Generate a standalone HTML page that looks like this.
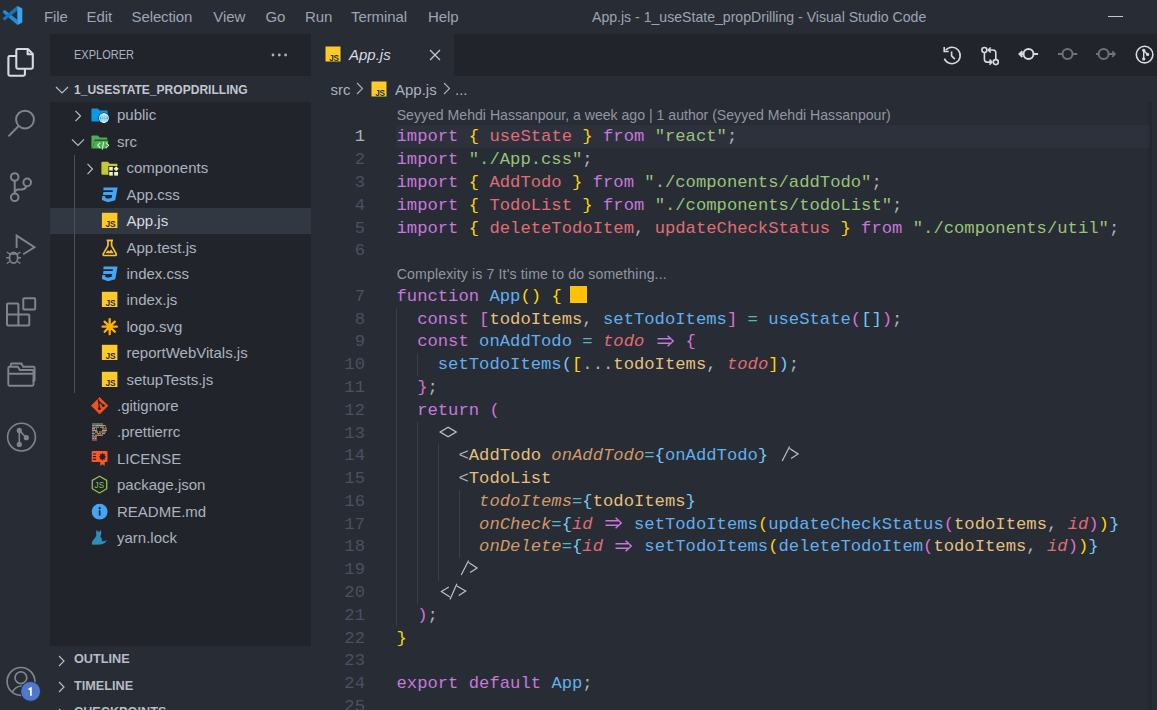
<!DOCTYPE html>
<html><head><meta charset="utf-8"><style>
*{margin:0;padding:0;box-sizing:border-box}
html,body{width:1157px;height:710px;overflow:hidden;background:#282c34;font-family:"Liberation Sans",sans-serif}
.abs{position:absolute}
#title{position:absolute;left:0;top:0;width:1157px;height:34px;background:#282c34}
.mi{position:absolute;top:7px;font-size:15px;line-height:20px;color:#9da5b4;letter-spacing:-0.1px}
#ttl{position:absolute;left:592px;top:7px;font-size:14.1px;line-height:20px;color:#9da5b4}
#act{position:absolute;left:0;top:34px;width:50px;height:676px;background:#282c34}
#side{position:absolute;left:50px;top:34px;width:261px;height:676px;background:#21252b;overflow:hidden}
.row{position:absolute;left:0;width:261px;height:26.3px}
.row.sel{background:#323842}
.row .lbl{position:absolute;top:4px;font-size:15px;line-height:18px;color:#abb2bf;white-space:nowrap}
.row.sel .lbl{color:#d7dae0}
.ico{position:absolute;line-height:0}
.chev{position:absolute;top:6.5px}
.sec{position:absolute;left:0;width:261px;background:#282c34}
.sech{position:absolute;left:23.8px;font-size:13.5px;line-height:16px;font-weight:bold;color:#b6bcc6;white-space:nowrap;transform:scaleX(0.94);transform-origin:0 0}
#editor{position:absolute;left:311px;top:34px;width:846px;height:676px;background:#282c34}
.ln{position:absolute;left:311px;width:54px;text-align:right;font-family:"Liberation Mono",monospace;font-size:17.22px;line-height:22.8px;height:22.8px;color:#495162}
.ln.act{color:#abb2bf}
.cl{position:absolute;left:396.5px;font-family:"Liberation Mono",monospace;font-size:17.22px;line-height:22.8px;height:22.8px;white-space:pre;color:#abb2bf}
.lens{position:absolute;margin-top:1.3px;left:396.7px;font-size:14.1px;line-height:22.8px;height:22.8px;color:#9197a2;white-space:nowrap}
.lig{display:inline-block;vertical-align:top;height:22.78px;line-height:0}
.lig svg{display:block}
.arr{display:inline-block;width:20.67px;height:12px;vertical-align:-0.5px;line-height:0}
.arr svg{display:block}
.guide{position:absolute;width:1px;background:#3b4048}
</style></head><body>
<div id="title">
<svg class="abs" style="left:0;top:0" width="30" height="30" viewBox="0 0 30 30"><path d="M2.9 12.4q-.4-.6.1-1.1l1-1q.6-.5 1.2 0L17.4 19.8v5.1z" fill="#1f8ddb"/><path d="M2.9 17.9q-.4.6.1 1.1l1 1q.6.5 1.2 0L17.4 10.6V5.8z" fill="#1a73b8"/><path d="M17.3 5.9l4.2 2q.8.4.8 1.2v12.6q0 .8-.8 1.2l-4.2 2z" fill="#3ba4ee"/></svg>
<div class="mi" style="left:44px">File</div><div class="mi" style="left:86.5px">Edit</div><div class="mi" style="left:131.5px">Selection</div><div class="mi" style="left:213.3px">View</div><div class="mi" style="left:265.5px">Go</div><div class="mi" style="left:305px">Run</div><div class="mi" style="left:351px">Terminal</div><div class="mi" style="left:428px">Help</div>
<div id="ttl">App.js - 1_useState_propDrilling - Visual Studio Code</div>
<div class="abs" style="left:1108px;top:15.5px;width:15px;height:1.3px;background:#c5c8ce"></div>
</div>
<div id="act"></div>
<svg class="abs" style="left:0;top:0" width="50" height="710" viewBox="0 0 50 710" fill="none" stroke-linecap="butt">
<g stroke="#d7dae0" stroke-width="2.1" stroke-linejoin="round">
<path d="M16.3 67.3V50.4q0-1.4 1.4-1.4H27.9l4.9 4.9v13.4q0 1.4-1.4 1.4H17.7q-1.4 0-1.4-1.4z"/>
<path d="M27.6 49.2v5h5"/>
<path d="M16.3 56H9.8q-1.4 0-1.4 1.4v16.9q0 1.4 1.4 1.4h13.7q1.4 0 1.4-1.4V68.8"/>
</g>
<g stroke="#7f848e" stroke-width="2">
<circle cx="25" cy="119.6" r="8.9"/>
<path d="M18.6 126L8.4 136.4"/>
<circle cx="14.7" cy="177" r="3.8"/>
<circle cx="14.7" cy="197.3" r="3.8"/>
<circle cx="27.2" cy="182.4" r="3.8"/>
<path d="M14.7 180.8v12.7M26.4 186.1q-1 3.3-4.6 3.3h-3.3q-3 0-3.8 2.8"/>
<path d="M16.6 248V235.6L34.5 247.2 23.2 254.3" stroke-width="1.9"/>
<ellipse cx="13.6" cy="257.7" rx="4.1" ry="5.4" stroke-width="1.7"/>
<path d="M9.8 254h7.6M6.8 252l3 2M20.4 252l-3 2M6.2 257.8h3.4M17.6 257.8h3.4M6.8 263.5l3-2M20.4 263.5l-3-2" stroke-width="1.5"/>
<path d="M24.3 298.2h9.9q1 0 1 1v9.2q0 1-1 1h-9.9q-1 0-1-1v-9.2q0-1 1-1zM8 303.4h9.4q1 0 1 1v10h9.9q1 0 1 1v9.2q0 1-1 1H8q-1 0-1-1V304.4q0-1 1-1zM7 314.4h11.4v10.7" stroke-width="2"/>
<path d="M8.3 384.6V368q0-1.2 1.2-1.2h8.3l2 3.2h12.5q1.2 0 1.2 1.2v13.4q0 1.2-1.2 1.2H9.5q-1.2 0-1.2-1.2zM8.3 373.8h24.3" stroke-width="1.9"/>
<path d="M10.8 366.7v-2.2q0-1 1-1h9.6l1.8 3.2h10.4q1 0 1 1v12.2q0 1-1 1h-1" stroke-width="1.9"/>
<circle cx="21.5" cy="437.1" r="13.9" stroke-width="1.6"/>
<path d="M19.3 430.4v14M19.3 430.4l7 7.3" stroke-width="1.6"/>
<circle cx="21" cy="681.4" r="13.9" stroke-width="1.7"/>
<circle cx="20.9" cy="677.8" r="5.9" stroke-width="1.7"/>
<path d="M12.3 692.3q3.2-6.3 9.6-6.3" stroke-width="1.7"/>
</g>
<g fill="#7f848e"><circle cx="19.3" cy="430.4" r="2.6"/><circle cx="26.3" cy="437.7" r="2.6"/><circle cx="19.3" cy="444.4" r="2.6"/></g>
<circle cx="30.6" cy="691.4" r="10" fill="#4d78cc" stroke="#282c34" stroke-width="1"/>
<path d="M28.6 689.6l2.3-1.3v7.5" stroke="#ffffff" stroke-width="1.7" fill="none"/>
</svg>
<div id="side">
<div class="abs" style="left:23.6px;top:13.3px;font-size:13.2px;line-height:16px;color:#abb2bf;transform:scaleX(0.835);transform-origin:0 0">EXPLORER</div>
<svg class="abs" style="left:221px;top:18.5px" width="17" height="4" viewBox="0 0 17 4"><circle cx="2" cy="2" r="1.4" fill="#abb2bf"/><circle cx="8.3" cy="2" r="1.4" fill="#abb2bf"/><circle cx="14.6" cy="2" r="1.4" fill="#abb2bf"/></svg>
<div class="sec" style="top:42px;height:26px">
<svg class="abs" style="left:5px;top:10px" width="14" height="8" viewBox="0 0 14 8"><path d="M1 1l6 6 6-6" fill="none" stroke="#b7bdc7" stroke-width="1.2"/></svg>
<div class="sech" style="left:24.3px;top:5.6px;font-size:13.7px;color:#c2c7cf;transform:scaleX(0.88)">1_USESTATE_PROPDRILLING</div>
</div>
<div class="row" style="top:68.4px"><svg class="chev" style="left:23.0px" width="10" height="14" viewBox="0 0 10 14"><path d="M2.5 1.8l5 5.2-5 5.2" fill="none" stroke="#b7bdc7" stroke-width="1.2"/></svg><svg class="ico" style="left:38px;top:2px" width="24" height="24" viewBox="0 0 24 24"><path d="M3.4 5.5q0-1 1-1h5.5l1.9 2h6.9q.9 0 .9.9v9.2q0 .9-.9.9H4.4q-1 0-1-1z" fill="#039be5"/><circle cx="15.9" cy="14.1" r="5.6" fill="#21252b"/><circle cx="15.9" cy="14.1" r="4.4" fill="#5fbff0" stroke="#e3f4fd" stroke-width="1.1"/><path d="M11.6 14.1h8.6" stroke="#039be5" stroke-width="1"/><path d="M15.9 9.8v8.6" stroke="#e3f4fd" stroke-width=".9"/><ellipse cx="15.9" cy="14.1" rx="2.1" ry="4.3" fill="none" stroke="#e3f4fd" stroke-width=".9"/></svg><div class="lbl" style="left:67.0px">public</div></div>
<div class="row" style="top:94.8px"><svg class="chev" style="left:21.0px;top:7.8px" width="14" height="10" viewBox="0 0 14 10"><path d="M1 2.3l6 6 6-6" fill="none" stroke="#b7bdc7" stroke-width="1.2"/></svg><svg class="ico" style="left:38px;top:2px" width="24" height="24" viewBox="0 0 24 24"><path d="M3.4 5.5q0-1 1-1h5.5l1.9 2h6.6q.9 0 .9.9v1.9H6.8L4.2 17.5H3.4z" fill="#4caf50"/><path d="M6.9 9.5H20.6L18.3 17.5H4.3z" fill="#4caf50"/><path d="M6.6 9.1H20.8" stroke="#21252b" stroke-width=".7"/><path d="M12.3 11.6L9.6 14.3 12.3 17M17.9 11.6L20.6 14.3 17.9 17M15.7 10.6L14.3 18.6" stroke="#d4ecd5" stroke-width="1.1" fill="none"/></svg><div class="lbl" style="left:67.0px">src</div></div>
<div class="row" style="top:121.2px"><svg class="chev" style="left:35.0px" width="10" height="14" viewBox="0 0 10 14"><path d="M2.5 1.8l5 5.2-5 5.2" fill="none" stroke="#b7bdc7" stroke-width="1.2"/></svg><svg class="ico" style="left:48px;top:2px" width="24" height="24" viewBox="0 0 24 24"><path d="M3.4 5.7q0-1 1-1h5.5l1.9 2h6.7q.9 0 .9.9v9.2q0 .9-.9.9H4.4q-1 0-1-1z" fill="#c0ca33"/><rect x="10.4" y="9" width="11" height="10.4" fill="#21252b"/><rect x="11.2" y="9.9" width="3.6" height="3.6" fill="#f0f4c3"/><rect x="11.2" y="15" width="3.6" height="3.6" fill="#f0f4c3"/><rect x="16.2" y="15" width="3.8" height="3.6" fill="#f0f4c3"/><path d="M18.2 9.3l2.5 2.5-2.5 2.5-2.5-2.5z" fill="#f0f4c3"/></svg><div class="lbl" style="left:76.5px">components</div></div>
<div class="row" style="top:147.7px"><svg class="ico" style="left:48px;top:0px" width="24" height="24" viewBox="0 0 24 24"><path d="M5.6 5.4H19.6L17.3 18.2 10 20.3 3.9 17.9 4.3 14.1H7.3L7.1 15.8 10 16.8 13.7 15.8 14.1 13.1H5L5.4 10H14.6L14.9 8.2H5.3Z" fill="#42a5f5"/></svg><div class="lbl" style="left:76.5px">App.css</div></div>
<div class="row sel" style="top:174.1px"><svg class="ico" style="left:48px;top:0px" width="24" height="24" viewBox="0 0 24 24"><rect x="3.9" y="4.8" width="15.5" height="15.2" fill="#ffca28"/><text x="7.6" y="19.4" font-family="Liberation Sans" font-weight="bold" font-size="8.4" letter-spacing="-0.3" fill="#282c34">JS</text></svg><div class="lbl" style="left:76.5px">App.js</div></div>
<div class="row" style="top:200.5px"><svg class="ico" style="left:48px;top:0px" width="24" height="24" viewBox="0 0 24 24"><path d="M8.6 5.4h6.4M10 5.6v5L5.4 18.6q-.9 1.9 1.2 1.9h10.3q2.1 0 1.2-1.9L13.6 10.6v-5" fill="none" stroke="#fbc02d" stroke-width="1.7" stroke-linejoin="round"/><path d="M7.6 18.2l2.3-3.2 1.5 1.4 1.6-1.9 2.9 3.7z" fill="#fbc02d"/></svg><div class="lbl" style="left:76.5px">App.test.js</div></div>
<div class="row" style="top:226.9px"><svg class="ico" style="left:48px;top:0px" width="24" height="24" viewBox="0 0 24 24"><path d="M5.6 5.4H19.6L17.3 18.2 10 20.3 3.9 17.9 4.3 14.1H7.3L7.1 15.8 10 16.8 13.7 15.8 14.1 13.1H5L5.4 10H14.6L14.9 8.2H5.3Z" fill="#42a5f5"/></svg><div class="lbl" style="left:76.5px">index.css</div></div>
<div class="row" style="top:253.3px"><svg class="ico" style="left:48px;top:0px" width="24" height="24" viewBox="0 0 24 24"><rect x="3.9" y="4.8" width="15.5" height="15.2" fill="#ffca28"/><text x="7.6" y="19.4" font-family="Liberation Sans" font-weight="bold" font-size="8.4" letter-spacing="-0.3" fill="#282c34">JS</text></svg><div class="lbl" style="left:76.5px">index.js</div></div>
<div class="row" style="top:279.8px"><svg class="ico" style="left:48px;top:0px" width="24" height="24" viewBox="0 0 24 24"><g stroke="#ffb300" stroke-width="2.3" stroke-linecap="round"><path d="M11.7 5.2v15M4.6 12.7h14.2M6.6 7.6l10.2 10.2M16.8 7.6L6.6 17.8"/></g><circle cx="11.7" cy="12.7" r="2.6" fill="#ffb300"/></svg><div class="lbl" style="left:76.5px">logo.svg</div></div>
<div class="row" style="top:306.2px"><svg class="ico" style="left:48px;top:0px" width="24" height="24" viewBox="0 0 24 24"><rect x="3.9" y="4.8" width="15.5" height="15.2" fill="#ffca28"/><text x="7.6" y="19.4" font-family="Liberation Sans" font-weight="bold" font-size="8.4" letter-spacing="-0.3" fill="#282c34">JS</text></svg><div class="lbl" style="left:76.5px">reportWebVitals.js</div></div>
<div class="row" style="top:332.6px"><svg class="ico" style="left:48px;top:0px" width="24" height="24" viewBox="0 0 24 24"><rect x="3.9" y="4.8" width="15.5" height="15.2" fill="#ffca28"/><text x="7.6" y="19.4" font-family="Liberation Sans" font-weight="bold" font-size="8.4" letter-spacing="-0.3" fill="#282c34">JS</text></svg><div class="lbl" style="left:76.5px">setupTests.js</div></div>
<div class="row" style="top:359.0px"><svg class="ico" style="left:38px;top:0px" width="24" height="24" viewBox="0 0 24 24"><path d="M11.65 4.5L19.85 12.7 11.65 20.9 3.45 12.7z" fill="#f4511e" stroke="#f4511e" stroke-width=".8" stroke-linejoin="round"/><path d="M10.4 6.3l1 9.2M11 8.6l4.3 3.8" stroke="#21252b" stroke-width="1.3"/><circle cx="11.4" cy="15.5" r="1.5" fill="#21252b"/><circle cx="15.3" cy="12.4" r="1.5" fill="#21252b"/></svg><div class="lbl" style="left:67.0px">.gitignore</div></div>
<div class="row" style="top:385.4px"><svg class="ico" style="left:38px;top:0px" width="24" height="24" viewBox="0 0 24 24"><g stroke-width="1.15"><path d="M4 5h11" stroke="#56b3b4"/><path d="M4 6.6h4" stroke="#ea5e5e"/><path d="M8 6.6h9.5" stroke="#d0a040"/><path d="M4 8.2h7" stroke="#56b3b4"/><path d="M12 8.2h4" stroke="#bf85bf"/><path d="M17 8.2h1.5" stroke="#56b3b4"/><path d="M4 9.8h3" stroke="#f7ba3e"/><path d="M8 9.8h1" stroke="#56b3b4"/><path d="M14 9.8h5" stroke="#ea5e5e"/><path d="M4 11.4h5" stroke="#bf85bf"/><path d="M14 11.4h5" stroke="#d0a040"/><path d="M4 13h2" stroke="#ea5e5e"/><path d="M7 13h3" stroke="#f7ba3e"/><path d="M11 13h7" stroke="#56b3b4"/><path d="M4 14.6h3" stroke="#56b3b4"/><path d="M9 14.6h4" stroke="#ea5e5e"/><path d="M14 14.6h3" stroke="#bf85bf"/><path d="M4 16.2h2" stroke="#bf85bf"/><path d="M7 16.2h8" stroke="#d0a040"/><path d="M4 17.8h5" stroke="#bf85bf"/><path d="M4 19.4h2" stroke="#56b3b4"/><path d="M6.5 19.4h2" stroke="#f7ba3e"/><path d="M4 21h5" stroke="#ea5e5e"/></g></svg><div class="lbl" style="left:67.0px">.prettierrc</div></div>
<div class="row" style="top:411.9px"><svg class="ico" style="left:38px;top:0px" width="24" height="24" viewBox="0 0 24 24"><path d="M4.7 5.1h13.8q1 0 1 1v8.8q0 1-1 1H4.7q-1 0-1-1V6.1q0-1 1-1z" fill="#ff5722"/><path d="M12.3 14.5v5.4l2.2-1.6 2.2 1.6v-5.4z" fill="#ff5722"/><path d="M4.9 8h3.2M4.9 10.7h3.2M4.9 13.4h3.2" stroke="#21252b" stroke-width="1.2"/><path d="M14.5 6.8l.9 1.5 1.7-.2-.4 1.7 1.4 1-1.4 1 .4 1.7-1.7-.2-.9 1.5-.9-1.5-1.7.2.4-1.7-1.4-1 1.4-1-.4-1.7 1.7.2z" fill="#21252b"/></svg><div class="lbl" style="left:67.0px">LICENSE</div></div>
<div class="row" style="top:438.3px"><svg class="ico" style="left:38px;top:0px" width="24" height="24" viewBox="0 0 24 24"><path d="M11.5 4.2l7.2 4.2v8.4l-7.2 4.2-7.2-4.2V8.4z" fill="none" stroke="#8bc34a" stroke-width="1.3" stroke-linejoin="round"/><text x="6.6" y="15.8" font-family="Liberation Sans" font-size="8.2" fill="#8bc34a">JS</text></svg><div class="lbl" style="left:67.0px">package.json</div></div>
<div class="row" style="top:464.7px"><svg class="ico" style="left:38px;top:0px" width="24" height="24" viewBox="0 0 24 24"><circle cx="11.65" cy="12.7" r="7.9" fill="#42a5f5"/><rect x="10.75" y="11.2" width="1.8" height="5.4" fill="#21252b"/><circle cx="11.65" cy="9.2" r="1.15" fill="#21252b"/></svg><div class="lbl" style="left:67.0px">README.md</div></div>
<div class="row" style="top:491.1px"><svg class="ico" style="left:38px;top:0px" width="24" height="24" viewBox="0 0 24 24"><path d="M8.4 4.7L9.8 6.6Q10.8 6.2 11.8 6.6L13 4.7 13.2 8.3Q13.4 10.2 12.3 11.3Q14.2 13.4 13.9 16.3Q16.6 16 19.1 15.4Q17.8 17.8 13.2 19.4L5.4 19.8Q3.7 19.8 3.9 18.3Q4.2 15.4 6.6 13.2Q8.1 11.8 8.3 10.2Q7.9 8 8.4 4.7Z" fill="#2c8ebb"/></svg><div class="lbl" style="left:67.0px">yarn.lock</div></div>

<div class="guide" style="left:24px;top:121.2px;height:237.8px;background:#4b5059"></div>
<div class="sec" style="top:611.5px;height:100px">
<svg class="abs" style="left:8px;top:9px" width="8" height="12" viewBox="0 0 8 12"><path d="M1 1l5 5-5 5" fill="none" stroke="#b7bdc7" stroke-width="1.2"/></svg>
<div class="sech" style="top:5.4px">OUTLINE</div>
<svg class="abs" style="left:8px;top:35.5px" width="8" height="12" viewBox="0 0 8 12"><path d="M1 1l5 5-5 5" fill="none" stroke="#b7bdc7" stroke-width="1.2"/></svg>
<div class="sech" style="top:32px">TIMELINE</div>
<svg class="abs" style="left:8px;top:62px" width="8" height="12" viewBox="0 0 8 12"><path d="M1 1l5 5-5 5" fill="none" stroke="#b7bdc7" stroke-width="1.2"/></svg>
<div class="sech" style="top:58.5px">CHECKPOINTS</div>
</div>
</div>
<div id="editor"></div>
<div class="abs" style="left:311px;top:34px;width:846px;height:42px;background:#21252b"></div>
<div class="abs" style="left:311px;top:34px;width:143px;height:42px;background:#282c34">
<div class="ico" style="left:14px;top:12px"><svg width="16" height="16" viewBox="0 0 16 16"><rect x="0.5" y="0.5" width="15" height="15" fill="#ffca28"/><text x="4.2" y="14.6" font-family="Liberation Sans" font-weight="bold" font-size="8.2" letter-spacing="-0.3" fill="#282c34">JS</text></svg></div>
<div class="abs" style="left:38px;top:11px;font-size:15px;line-height:20px;font-style:italic;color:#d7dae0">App.js</div>
<svg class="abs" style="left:118px;top:15px" width="12" height="12" viewBox="0 0 12 12"><path d="M1 1l10 10M11 1L1 11" stroke="#c5c8ce" stroke-width="1.3"/></svg>
</div>
<div class="abs" style="left:330.5px;top:80px;font-size:15px;line-height:20px;color:#abb2bf">src</div>
<svg class="abs" style="left:356px;top:82px" width="8" height="13" viewBox="0 0 8 13"><path d="M1 1l5.5 5.5L1 12" fill="none" stroke="#abb2bf" stroke-width="1.1"/></svg>
<div class="ico abs" style="left:371px;top:81px"><svg width="16" height="16" viewBox="0 0 16 16"><rect x="0.5" y="0.5" width="15" height="15" fill="#ffca28"/><text x="4.2" y="14.6" font-family="Liberation Sans" font-weight="bold" font-size="8.2" letter-spacing="-0.3" fill="#282c34">JS</text></svg></div>
<div class="abs" style="left:395px;top:80px;font-size:15px;line-height:20px;color:#abb2bf">App.js</div>
<svg class="abs" style="left:443px;top:82px" width="8" height="13" viewBox="0 0 8 13"><path d="M1 1l5.5 5.5L1 12" fill="none" stroke="#abb2bf" stroke-width="1.1"/></svg>
<div class="abs" style="left:455px;top:80px;font-size:15px;line-height:20px;color:#abb2bf">...</div>

<svg class="abs" style="left:930px;top:36px" width="227" height="40" viewBox="930 36 227 40" fill="none">
<g stroke="#d7dae0" stroke-width="1.6">
<path d="M945.6 50.3A8.2 8.2 0 1 1 944.4 58.6"/>
<path d="M944.2 47v4.5h4.5"/>
<path d="M951.6 51.5v4.3l3.3 3.3"/>
<circle cx="984.4" cy="50" r="2.5"/>
<circle cx="995.8" cy="62.1" r="2.5"/>
<path d="M984.4 52.5v6.8q0 2.8 2.8 2.8h4.6M989.5 59.6l2.4 2.5-2.4 2.5"/>
<path d="M995.8 59.6v-6.8q0-2.8-2.8-2.8h-4.6M990.7 47.5l-2.4 2.5 2.4 2.5"/>
<circle cx="1028.5" cy="54.1" r="5" stroke-width="2"/>
<path d="M1019.6 54.1h3.9M1033.5 54.1h4.6M1022.4 51.2l-2.9 2.9 2.9 2.9" stroke-width="2"/>
<circle cx="1144.6" cy="54.6" r="8.3" stroke-width="1.6"/>
<path d="M1143.7 50.3v8.6M1143.7 50.5l3.6 3.8" stroke-width="1.4"/>
</g>
<g fill="#d7dae0"><circle cx="1143.7" cy="50.3" r="1.6"/><circle cx="1147.6" cy="54.4" r="1.6"/><circle cx="1143.7" cy="58.9" r="1.6"/></g>
<g stroke="#6e737b" stroke-width="2">
<circle cx="1067.5" cy="54.1" r="5"/>
<path d="M1058 54.1h4.5M1072.5 54.1h4.7"/>
<circle cx="1103.6" cy="54.1" r="5"/>
<path d="M1096 54.1h2.6M1108.6 54.1h5.8"/><path d="M1112.2 51.3l2.8 2.8-2.8 2.8" stroke-width="1.6"/>
</g>
</svg>
<div class="abs" style="left:396px;top:125.4px;width:754px;height:22.8px;background:#2c313c"></div>
<div class="lens" style="top:102.6px">Seyyed Mehdi Hassanpour, a week ago | 1 author (Seyyed Mehdi Hassanpour)</div>
<div class="lens" style="top:262.1px;letter-spacing:0.15px">Complexity is 7 It&#39;s time to do something...</div>
<div class="guide" style="left:396.0px;top:307.6px;height:318.9px"></div><div class="guide" style="left:417.0px;top:353.2px;height:22.8px"></div><div class="guide" style="left:417.0px;top:421.5px;height:182.2px"></div><div class="guide" style="left:438.0px;top:444.3px;height:136.7px"></div><div class="guide" style="left:459.0px;top:489.9px;height:68.3px"></div>
<div class="ln act" style="top:126.4px">1</div>
<div class="cl" style="top:126.4px"><span style="color:#c678dd">import</span><span style="color:#abb2bf"> </span><span style="color:#ffd700">{</span><span style="color:#abb2bf"> </span><span style="color:#e06c75">useState</span><span style="color:#abb2bf"> </span><span style="color:#ffd700">}</span><span style="color:#abb2bf"> </span><span style="color:#c678dd">from</span><span style="color:#abb2bf"> </span><span style="color:#98c379">&quot;react&quot;</span><span style="color:#abb2bf">;</span></div>
<div class="ln" style="top:149.2px">2</div>
<div class="cl" style="top:149.2px"><span style="color:#c678dd">import</span><span style="color:#abb2bf"> </span><span style="color:#98c379">&quot;./App.css&quot;</span><span style="color:#abb2bf">;</span></div>
<div class="ln" style="top:172.0px">3</div>
<div class="cl" style="top:172.0px"><span style="color:#c678dd">import</span><span style="color:#abb2bf"> </span><span style="color:#ffd700">{</span><span style="color:#e06c75"> AddTodo </span><span style="color:#ffd700">}</span><span style="color:#abb2bf"> </span><span style="color:#c678dd">from</span><span style="color:#abb2bf"> </span><span style="color:#98c379">&quot;./components/addTodo&quot;</span><span style="color:#abb2bf">;</span></div>
<div class="ln" style="top:194.7px">4</div>
<div class="cl" style="top:194.7px"><span style="color:#c678dd">import</span><span style="color:#abb2bf"> </span><span style="color:#ffd700">{</span><span style="color:#e06c75"> TodoList </span><span style="color:#ffd700">}</span><span style="color:#abb2bf"> </span><span style="color:#c678dd">from</span><span style="color:#abb2bf"> </span><span style="color:#98c379">&quot;./components/todoList&quot;</span><span style="color:#abb2bf">;</span></div>
<div class="ln" style="top:217.5px">5</div>
<div class="cl" style="top:217.5px"><span style="color:#c678dd">import</span><span style="color:#abb2bf"> </span><span style="color:#ffd700">{</span><span style="color:#e06c75"> deleteTodoItem</span><span style="color:#abb2bf">, </span><span style="color:#e06c75">updateCheckStatus </span><span style="color:#ffd700">}</span><span style="color:#abb2bf"> </span><span style="color:#c678dd">from</span><span style="color:#abb2bf"> </span><span style="color:#98c379">&quot;./components/util&quot;</span><span style="color:#abb2bf">;</span></div>
<div class="ln" style="top:240.3px">6</div>
<div class="cl" style="top:240.3px"></div>
<div class="ln" style="top:285.9px">7</div>
<div class="cl" style="top:285.9px"><span style="color:#c678dd">function</span><span style="color:#abb2bf"> </span><span style="color:#61afef">App</span><span style="color:#ffd700">()</span><span style="color:#abb2bf"> </span><span style="color:#ffd700">{</span></div>
<div class="ln" style="top:308.6px">8</div>
<div class="cl" style="top:308.6px"><span style="color:#c678dd">  const</span><span style="color:#abb2bf"> </span><span style="color:#da70d6">[</span><span style="color:#e5c07b">todoItems</span><span style="color:#abb2bf">, </span><span style="color:#61afef">setTodoItems</span><span style="color:#da70d6">]</span><span style="color:#abb2bf"> </span><span style="color:#56b6c2">=</span><span style="color:#abb2bf"> </span><span style="color:#61afef">useState</span><span style="color:#da70d6">(</span><span style="color:#77c7f7">[]</span><span style="color:#da70d6">)</span><span style="color:#abb2bf">;</span></div>
<div class="ln" style="top:331.4px">9</div>
<div class="cl" style="top:331.4px"><span style="color:#c678dd">  const</span><span style="color:#abb2bf"> </span><span style="color:#61afef">onAddTodo</span><span style="color:#abb2bf"> </span><span style="color:#56b6c2">=</span><span style="color:#abb2bf"> </span><span style="color:#e06c75;font-style:italic">todo</span><span style="color:#abb2bf"> </span><span class="arr"><svg width="20.6" height="12" viewBox="0 0 20.6 12"><path d="M2.5 3.8h12.5M2.5 8.2h12.5M12.6 0.8l5.6 5.2-5.6 5.2" fill="none" stroke="#c678dd" stroke-width="1.5"/></svg></span><span style="color:#abb2bf"> </span><span style="color:#da70d6">{</span></div>
<div class="ln" style="top:354.2px">10</div>
<div class="cl" style="top:354.2px"><span style="color:#61afef">    setTodoItems</span><span style="color:#77c7f7">(</span><span style="color:#ffd700">[</span><span style="color:#abb2bf">...</span><span style="color:#e5c07b">todoItems</span><span style="color:#abb2bf">, </span><span style="color:#e06c75;font-style:italic">todo</span><span style="color:#ffd700">]</span><span style="color:#77c7f7">)</span><span style="color:#abb2bf">;</span></div>
<div class="ln" style="top:377.0px">11</div>
<div class="cl" style="top:377.0px"><span style="color:#abb2bf">  </span><span style="color:#da70d6">}</span><span style="color:#abb2bf">;</span></div>
<div class="ln" style="top:399.8px">12</div>
<div class="cl" style="top:399.8px"><span style="color:#c678dd">  return</span><span style="color:#abb2bf"> </span><span style="color:#da70d6">(</span></div>
<div class="ln" style="top:422.5px">13</div>
<div class="cl" style="top:422.5px"><span style="color:#abb2bf">    </span><span class="arr"><svg width="20.6" height="12" viewBox="0 0 20.6 12"><path d="M2.2 6L10.1 1.2 18.2 6 10.1 10.8z" fill="none" stroke="#bcc2cb" stroke-width="1.3"/></svg></span></div>
<div class="ln" style="top:445.3px">14</div>
<div class="cl" style="top:445.3px"><span style="color:#abb2bf">      &lt;</span><span style="color:#e5c07b">AddTodo</span><span style="color:#abb2bf"> </span><span style="color:#d19a66;font-style:italic">onAddTodo</span><span style="color:#56b6c2">=</span><span style="color:#77c7f7">{</span><span style="color:#61afef">onAddTodo</span><span style="color:#77c7f7">}</span><span style="color:#abb2bf"> </span><span class="lig" style="width:20.67px"><svg width="20.67" height="22.78" viewBox="0 0 20.67 22.78"><path d="M3.2 16.1L10.6 1.4M10.6 3.6L19.1 9 12.1 13.6" fill="none" stroke="#bcc2cb" stroke-width="1.2"/></svg></span></div>
<div class="ln" style="top:468.1px">15</div>
<div class="cl" style="top:468.1px"><span style="color:#abb2bf">      &lt;</span><span style="color:#e5c07b">TodoList</span></div>
<div class="ln" style="top:490.9px">16</div>
<div class="cl" style="top:490.9px"><span style="color:#abb2bf">        </span><span style="color:#d19a66;font-style:italic">todoItems</span><span style="color:#56b6c2">=</span><span style="color:#77c7f7">{</span><span style="color:#e5c07b">todoItems</span><span style="color:#77c7f7">}</span></div>
<div class="ln" style="top:513.7px">17</div>
<div class="cl" style="top:513.7px"><span style="color:#abb2bf">        </span><span style="color:#d19a66;font-style:italic">onCheck</span><span style="color:#56b6c2">=</span><span style="color:#77c7f7">{</span><span style="color:#e06c75;font-style:italic">id</span><span style="color:#abb2bf"> </span><span class="arr"><svg width="20.6" height="12" viewBox="0 0 20.6 12"><path d="M2.5 3.8h12.5M2.5 8.2h12.5M12.6 0.8l5.6 5.2-5.6 5.2" fill="none" stroke="#c678dd" stroke-width="1.5"/></svg></span><span style="color:#abb2bf"> </span><span style="color:#61afef">setTodoItems</span><span style="color:#ffd700">(</span><span style="color:#61afef">updateCheckStatus</span><span style="color:#da70d6">(</span><span style="color:#e5c07b">todoItems</span><span style="color:#abb2bf">, </span><span style="color:#e06c75;font-style:italic">id</span><span style="color:#da70d6">)</span><span style="color:#ffd700">)</span><span style="color:#77c7f7">}</span></div>
<div class="ln" style="top:536.4px">18</div>
<div class="cl" style="top:536.4px"><span style="color:#abb2bf">        </span><span style="color:#d19a66;font-style:italic">onDelete</span><span style="color:#56b6c2">=</span><span style="color:#77c7f7">{</span><span style="color:#e06c75;font-style:italic">id</span><span style="color:#abb2bf"> </span><span class="arr"><svg width="20.6" height="12" viewBox="0 0 20.6 12"><path d="M2.5 3.8h12.5M2.5 8.2h12.5M12.6 0.8l5.6 5.2-5.6 5.2" fill="none" stroke="#c678dd" stroke-width="1.5"/></svg></span><span style="color:#abb2bf"> </span><span style="color:#61afef">setTodoItems</span><span style="color:#ffd700">(</span><span style="color:#61afef">deleteTodoItem</span><span style="color:#da70d6">(</span><span style="color:#e5c07b">todoItems</span><span style="color:#abb2bf">, </span><span style="color:#e06c75;font-style:italic">id</span><span style="color:#da70d6">)</span><span style="color:#ffd700">)</span><span style="color:#77c7f7">}</span></div>
<div class="ln" style="top:559.2px">19</div>
<div class="cl" style="top:559.2px"><span style="color:#abb2bf">      </span><span class="lig" style="width:20.67px"><svg width="20.67" height="22.78" viewBox="0 0 20.67 22.78"><path d="M3.2 16.1L10.6 1.4M10.6 3.6L19.1 9 12.1 13.6" fill="none" stroke="#bcc2cb" stroke-width="1.2"/></svg></span></div>
<div class="ln" style="top:582.0px">20</div>
<div class="cl" style="top:582.0px"><span style="color:#abb2bf">    </span><span class="lig" style="width:31px"><svg width="31" height="22.78" viewBox="0 0 31 22.78"><path d="M10.8 5.1L3.4 9.6 11.9 15M12 17.4L18.9 1.7M18.9 4L27.7 9 20.8 13.6" fill="none" stroke="#bcc2cb" stroke-width="1.2"/></svg></span></div>
<div class="ln" style="top:604.8px">21</div>
<div class="cl" style="top:604.8px"><span style="color:#abb2bf">  </span><span style="color:#da70d6">)</span><span style="color:#abb2bf">;</span></div>
<div class="ln" style="top:627.6px">22</div>
<div class="cl" style="top:627.6px"><span style="color:#ffd700">}</span></div>
<div class="ln" style="top:650.3px">23</div>
<div class="cl" style="top:650.3px"></div>
<div class="ln" style="top:673.1px">24</div>
<div class="cl" style="top:673.1px"><span style="color:#c678dd">export</span><span style="color:#abb2bf"> </span><span style="color:#c678dd">default</span><span style="color:#abb2bf"> </span><span style="color:#61afef">App</span><span style="color:#abb2bf">;</span></div>
<div class="ln" style="top:695.9px">25</div>
<div class="cl" style="top:695.9px"></div>
<div class="abs" style="left:1144.5px;top:102.4px;width:7.5px;height:608px;background:linear-gradient(to right,rgba(0,0,0,0),rgba(0,0,0,0.1) 75%,rgba(0,0,0,0.16))"></div>
<div class="abs" style="left:570px;top:285.5px;width:17px;height:17px;background:#ffc107"></div>
</body></html>
